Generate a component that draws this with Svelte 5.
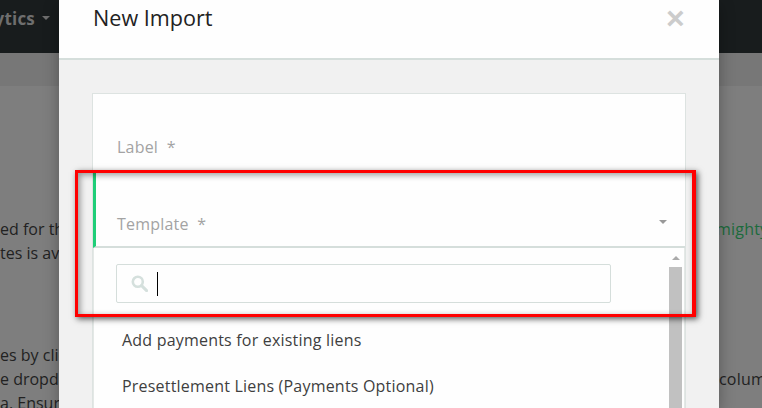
<script lang="ts">
  const templates = [
    'Add payments for existing liens',
    'Presettlement Liens (Payments Optional)',
    'Update existing liens',
  ];
</script>

<div class="page">
  <nav class="navbar">
    <span class="brand">Analytics<i class="nav-caret"></i></span>
  </nav>
  <div class="subbar"></div>
  <main class="content">
    <div class="line first"><span class="left">ed for the</span><span class="right link">mighty</span></div>
    <div class="line"><span class="left">tes is available</span></div>
    <div class="line second"><span class="left">es by clicking</span></div>
    <div class="line"><span class="left">e dropdown</span><span class="right">column</span></div>
    <div class="line"><span class="left">a. Ensure</span></div>
  </main>

  <section class="modal">
    <header class="modal-header">
      <h4>New Import</h4>
      <span class="close">×</span>
    </header>
    <div class="modal-body">
      <div class="card">
        <div class="field">Label&nbsp; *</div>
        <div class="field active">
          Template&nbsp; *
          <i class="select-caret"></i>
        </div>
        <div class="dropdown">
          <div class="options">
            <div class="search">
              <svg width="17" height="17" viewBox="0 0 17 17" aria-hidden="true">
                <circle cx="6.8" cy="6.8" r="5" fill="none" stroke="#d5e0dd" stroke-width="2.6" />
                <path d="M10.6 10.6 15.6 15.6" stroke="#d5e0dd" stroke-width="3" stroke-linecap="round" />
              </svg>
              <span class="cursor"></span>
            </div>
            <ul>
              {#each templates as t}
                <li>{t}</li>
              {/each}
            </ul>
          </div>
          <div class="scrollbar">
            <i class="arrow-up"></i>
            <div class="thumb"></div>
          </div>
        </div>
      </div>
    </div>
  </section>

  <div class="highlight"></div>
</div>

<style>
  :global(body) {
    margin: 0;
  }
  .page {
    position: relative;
    width: 762px;
    height: 408px;
    overflow: hidden;
    background: #7e7e7e;
    font-family: 'Open Sans', sans-serif;
    font-size: 16px;
    letter-spacing: 0.2px;
  }
  .navbar {
    height: 53px;
    background: #181c1d;
  }
  .brand {
    display: flex;
    align-items: center;
    justify-content: flex-end;
    width: 50px;
    height: 36px;
    white-space: nowrap;
    font-size: 17px;
    font-weight: 700;
    color: #6e6e6e;
    overflow: hidden;
  }
  .nav-caret {
    flex: none;
    margin-left: 7px;
    border-top: 4px solid #6e6e6e;
    border-left: 4px solid transparent;
    border-right: 4px solid transparent;
  }
  .subbar {
    height: 33px;
    background: #777;
  }
  .content {
    padding-top: 131px;
    color: #222;
  }
  .line {
    display: flex;
    justify-content: space-between;
    height: 24px;
    line-height: 24px;
    white-space: nowrap;
  }
  .line.second {
    margin-top: 78px;
  }
  .left {
    width: 59px;
    overflow: hidden;
    letter-spacing: 0;
  }
  .right {
    width: 43px;
    overflow: hidden;
  }
  .link {
    color: #1c6b3c;
    text-indent: -3px;
  }
  .modal {
    position: absolute;
    left: 59px;
    top: 0;
    width: 660px;
    height: 408px;
    background: #f1f1f1;
    box-shadow: 0 5px 15px rgba(0, 0, 0, 0.3);
  }
  .modal-header {
    height: 58px;
    background: #fefefe;
    border-bottom: 2px solid #d5dedb;
    display: flex;
    justify-content: space-between;
    padding: 0 34px;
  }
  h4 {
    margin: 3px 0 0;
    font-size: 21.6px;
    font-weight: 400;
    letter-spacing: 0;
    line-height: 30px;
    color: #222;
  }
  .close {
    font-family: 'Liberation Sans', sans-serif;
    font-size: 32px;
    font-weight: 700;
    line-height: 36px;
    color: #ccc;
  }
  .modal-body {
    padding: 33px 33px 0;
  }
  .card {
    background: #fefefe;
    border: 1px solid #dde3e1;
    border-bottom: 0;
  }
  .field {
    position: relative;
    box-sizing: border-box;
    height: 77px;
    padding: 41px 24px 0;
    line-height: 24px;
    color: #a3a3a3;
  }
  .field.active {
    border-left: 3px solid #1fce78;
    border-bottom: 2px solid #d5dedb;
    padding-left: 21px;
  }
  .select-caret {
    position: absolute;
    right: 18px;
    top: 49px;
    border-top: 4px solid #999;
    border-left: 4px solid transparent;
    border-right: 4px solid transparent;
  }
  .dropdown {
    display: flex;
    height: 170px;
    border-right: 1px solid #e4e8e6;
    border-left: 1px solid #e4e8e6;
  }
  .options {
    flex: 1;
    padding: 16px 58px 0 22px;
    min-width: 0;
  }
  .search {
    display: flex;
    align-items: center;
    gap: 9px;
    box-sizing: border-box;
    height: 39px;
    padding-left: 14px;
    border: 1px solid #d5dedb;
    border-radius: 2px;
    width: 495px;
  }
  .cursor {
    width: 1px;
    height: 24px;
    background: #000;
  }
  ul {
    list-style: none;
    margin: 14px 0 0;
    padding: 0 0 0 6px;
    color: #3f3f3f;
  }
  li {
    height: 46px;
    line-height: 46px;
    white-space: nowrap;
  }
  .scrollbar {
    flex: none;
    width: 13px;
    margin-right: 2px;
    padding-top: 8px;
    display: flex;
    flex-direction: column;
    align-items: center;
  }
  .arrow-up {
    border-bottom: 4px solid #aaa;
    border-left: 4px solid transparent;
    border-right: 4px solid transparent;
  }
  .thumb {
    flex: 1;
    align-self: stretch;
    margin-top: 7px;
    background: #c1c1c1;
  }
  .highlight {
    position: absolute;
    left: 75px;
    top: 170px;
    width: 621px;
    height: 147px;
    box-sizing: border-box;
    border: 3px solid #ff0000;
    border-right-width: 4px;
    box-shadow:
      2px 2px 6px rgba(0, 0, 0, 0.65),
      inset 2px 2px 6px rgba(0, 0, 0, 0.4);
  }
</style>
